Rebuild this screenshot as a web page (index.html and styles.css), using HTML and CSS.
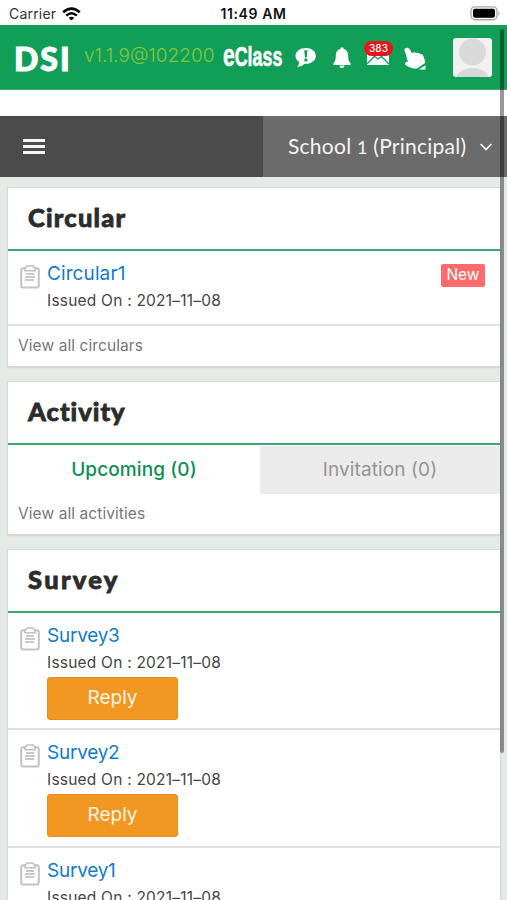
FILE: index.html
```html
<!DOCTYPE html>
<html lang="en">
<head>
<meta charset="utf-8">
<meta name="viewport" content="width=device-width">
<title>eClass</title>
<link rel="stylesheet" href="styles.css">
</head>
<body>
<svg class="defs" aria-hidden="true">
  <symbol id="clipboard" viewBox="0 0 20 24">
    <rect x="1.200" y="3.200" width="17.600" height="19.300" rx="2" fill="#fff" stroke="#c3c3c3" stroke-width="2"/>
    <path d="M5 5.800V3.200L7 1h6l2 2.200v2.600z" fill="#fff" stroke="#c0c0c0" stroke-width="1.600"/>
    <path d="M6 9h8M5 12h10M5 15h9" stroke="#b8b8b8" stroke-width="1.500"/>
  </symbol>
</svg>
<div class="status">
  <div class="carrier"><span>Carrier</span>
    <svg width="19" height="14" viewBox="0 0 19 14" fill="none" stroke="#000" stroke-width="2.500"><path d="M1.200 5.300Q9.500-2 17.800 5.300M4.200 8.600Q9.500 4 14.800 8.600"/><path d="M9.500 13.600 6.600 10.800Q9.500 8.500 12.400 10.800Z" fill="#000" stroke="none"/></svg>
  </div>
  <div class="time">11:49 AM</div>
  <svg class="battery" width="31" height="15" viewBox="0 0 31 15"><rect x="1" y=".9" width="26" height="12.800" rx="4" fill="#fff" stroke="#aaa" stroke-width="1.400"/><rect x="3" y="2.800" width="22" height="9" rx="2" fill="#000"/><path d="M28.500 5q2 2.300 0 4.600z" fill="#999"/></svg>
</div>
<header class="header">
  <span class="brand">DSI</span>
  <span class="version">v1.1.9@102200</span>
  <span class="logo"><span class="logo-text"><b>e</b>Class</span></span>
  <svg class="ic-chat" width="21" height="21" viewBox="0 0 21 21"><path d="M11 1C5.200 1 .5 4.500 .5 9c0 2.700 1.500 4.700 3.800 6-.1 2-.9 3.700-2.200 4.800 3 .1 5.500-1 7.500-3C16 17.200 20.800 13.800 20.800 9S16.500 1 11 1Z" fill="#fff"/><path d="M9.200 3.300h3.300l-.8 7.200H10z" fill="#119e57"/><circle cx="10.900" cy="13" r="1.700" fill="#119e57"/></svg>
  <svg class="ic-bell" width="18" height="21" viewBox="0 0 18 21" fill="#fff"><path d="M7.500 2V.5h3V2c3.300.6 4.700 3.200 4.700 6.500 0 4.500.7 6 2.300 7.500v2H.5v-2c1.600-1.500 2.300-3 2.300-7.500C2.800 5.200 4.200 2.600 7.500 2ZM6.500 18.500h5Q11.300 21 9 21t-2.500-2.500Z"/></svg>
  <span class="mail">
    <svg width="24" height="18" viewBox="0 0 24 18"><path d="M1 0h22v17H1z" fill="#fff"/><path d="m1 3 11 8L23 3M1 16l7.500-7.500M23 16l-7.500-7.500" fill="none" stroke="#119e57" stroke-width="1.300"/></svg>
    <span class="badge">383</span>
  </span>
  <svg class="ic-hand" width="23" height="24" viewBox="0 0 23 24" fill="#fff"><path d="M1 1.600C2.300.2 4.800.8 5.700 2.200l2.100 4c1.800-1.200 3.300-1 4.600-.2 1.500-.6 2.800-.2 3.700 1 1.700-.3 2.900.6 3.300 2.300l1.700 4.600c.3 1.200 0 2-.8 2.700l-6.500 4.500c-2 1-5.400.5-8.400-1.200-3.500-.8-5.300-2.600-3.900-4.300 1-.9 1.800-.9 2.500-.6L1 4.800C.2 3.600.1 2.500 1 1.600Z"/><path d="M15 22.500 21.500 18.300V22.500z"/></svg>
  <svg class="avatar" width="39" height="39" viewBox="0 0 39 39"><clipPath id="face"><rect width="39" height="39" rx="3"/></clipPath><g clip-path="url(#face)"><rect width="39" height="39" fill="#f1f1f1"/><circle cx="19.500" cy="14" r="13.500" fill="#d9d9d9"/><ellipse cx="19.500" cy="40" rx="16" ry="10" fill="#d9d9d9"/></g></svg>
</header>
<nav class="nav">
  <div class="menu"><i></i><i></i><i></i></div>
  <div class="school"><span class="school-name">School <span class="one">1</span> (Principal)</span>
    <svg width="12" height="8" viewBox="0 0 12 8" fill="none" stroke="#fff" stroke-width="1.700"><path d="m.7 1 5.300 5.500L11.300 1"/></svg>
  </div>
</nav>
<main class="main">
  <section class="card circular">
    <h2>Circular</h2>
    <article class="item">
      <svg class="clip"><use href="#clipboard"/></svg>
      <div class="info"><a>Circular1</a><p>Issued On : 2021–11–08</p></div>
      <span class="new"><span>New</span></span>
    </article>
    <div class="all ruled">View all circulars</div>
  </section>
  <section class="card activity">
    <h2>Activity</h2>
    <div class="tabs"><div class="tab on"><span>Upcoming (0)</span></div><div class="tab"><span>Invitation (0)</span></div></div>
    <div class="all">View all activities</div>
  </section>
  <section class="card survey">
    <h2>Survey</h2>
    <article class="item"><svg class="clip"><use href="#clipboard"/></svg><div class="info"><a>Survey3</a><p>Issued On : 2021–11–08</p><button>Reply</button></div></article>
    <article class="item"><svg class="clip"><use href="#clipboard"/></svg><div class="info"><a>Survey2</a><p>Issued On : 2021–11–08</p><button>Reply</button></div></article>
    <article class="item"><svg class="clip"><use href="#clipboard"/></svg><div class="info"><a>Survey1</a><p>Issued On : 2021–11–08</p></div></article>
  </section>
</main>
<div class="scrollbar"></div>
</body>
</html>
```

FILE: styles.css
```css
* { box-sizing: border-box; }
html, body { height: 900px; overflow: hidden; }
body { margin: 0; background: #fff; font-family: Inter, "Liberation Sans", sans-serif; color: #444; }
.defs { position: absolute; width: 0; height: 0; }
.status { height: 25px; display: grid; grid-template-columns: 1fr auto 1fr; align-items: center; padding: 2px 6px 0 9px; color: #111; font-size: 14px; }
.carrier { display: flex; align-items: center; gap: 6px; letter-spacing: .2px; color: #333; }
.time { font-weight: 600; font-size: 14px; letter-spacing: .6px; margin-left: -3px; }
.battery { justify-self: end; }
.header { height: 65px; background: #119e57; border-bottom: 1px solid #3fae77; display: flex; align-items: center; padding: 0 15px 0 14px; color: #fff; }
.brand { font: 900 32px/40px Lato, sans-serif; letter-spacing: 2px; width: 70px; padding-top: 3px; white-space: nowrap; -webkit-text-stroke: 1px #fff; }
.version { width: 139px; font-size: 19px; line-height: 24px; color: #84c93c; font-weight: 300; padding-bottom: 3px; white-space: nowrap; }
.logo { width: 61px; height: 30px; line-height: 30px; }
.logo-text { display: inline-block; font: 700 27px/30px "Liberation Sans", sans-serif; transform: scaleX(.66); transform-origin: left; white-space: nowrap; -webkit-text-stroke: .6px #fff; }
.logo-text b { font-size: 32px; line-height: 20px; }
.ic-chat { margin-left: 11px; }
.ic-bell { margin-left: 17px; }
.mail { position: relative; width: 24px; height: 18px; margin-left: 15px; }
.mail svg { display: block; }
.badge { position: absolute; left: -2px; top: -7px; width: 29px; height: 15px; border-radius: 8px; background: #e9151b; color: #fff; font-size: 10px; line-height: 15px; text-align: center; font-weight: 500; }
.ic-hand { margin: 4px 0 0 14px; }
.avatar { margin: 0 0 0 auto; }
.nav { height: 61px; margin-top: 26px; background: #4b4b4b; display: flex; }
.menu { width: 263px; padding: 23px 0 0 23px; display: flex; flex-direction: column; gap: 3px; }
.menu i { width: 22px; height: 3px; background: #f5f5f5; }
.school { flex: 1; background: #6b6b6b; display: flex; align-items: center; padding-left: 25px; color: #f4f4f4; }
.school-name { font: 400 21px/30px Lato, sans-serif; width: 192px; white-space: nowrap; letter-spacing: .25px; }
.one { font-size: 18px; }
.main { background: #e4ebe6; padding: 10px 6px 0 7px; height: 723px; overflow: hidden; display: flex; flex-direction: column; gap: 14px; }
.card { background: #fff; border: 1px solid #d5dad6; flex: none; box-shadow: 0 1px 1px #d3dad5; }
.circular { height: 180px; }
.activity { height: 154px; }
.card h2 { margin: 0; height: 63px; border-bottom: 2px solid #35aa70; padding: 0 20px; font: 900 25.500px/59px Lato, sans-serif; color: #2c2c2c; letter-spacing: 1.200px; -webkit-text-stroke: .8px #2c2c2c; }
.activity h2 { letter-spacing: 1px; }
.survey h2 { letter-spacing: 2.300px; }
.item { display: flex; padding: 11px 15px 0 11px; height: 73px; }
.clip { width: 20px; height: 24px; margin: 3px 7px 0 1px; flex: none; }
.info { flex: 1; white-space: nowrap; }
.info a { display: block; font-size: 19px; line-height: 24px; color: #147bcb; letter-spacing: .1px; }
.survey .info a { letter-spacing: -.25px; }
.info p { margin: 3px 0 0; font-size: 15.500px; line-height: 24px; letter-spacing: .22px; }
.new { width: 44px; height: 23px; margin-top: 2px; border-radius: 2px; background: #fd6b6e; color: #fff; font-size: 15.500px; line-height: 22px; text-align: center; }
.all { height: 41px; padding-left: 10px; font-size: 15.500px; line-height: 40px; color: #777; letter-spacing: .08px; }
.ruled { border-top: 2px solid #e2e2e2; }
.tabs { display: flex; height: 49px; }
.tab { flex: 1; background: #ebebeb; color: #949494; text-align: center; font-size: 19px; line-height: 47px; margin-top: 1px; letter-spacing: .1px; }
.tab.on { flex: 0 0 252px; background: #fff; color: #0d8e56; font-weight: 500; }
.survey .item { height: 117.300px; border-bottom: 2px solid #e0e0e0; }
button { display: block; width: 131px; height: 43px; margin-top: 2px; padding: 0 0 2px; border: 1px solid #e38f20; border-radius: 3px; background: #f19722; color: #fff4e2; font: 400 19px Inter, sans-serif; }
.scrollbar { position: absolute; left: 500px; top: 29px; width: 4px; height: 724px; border-radius: 2px; background: rgba(0, 0, 0, .4); }
```
